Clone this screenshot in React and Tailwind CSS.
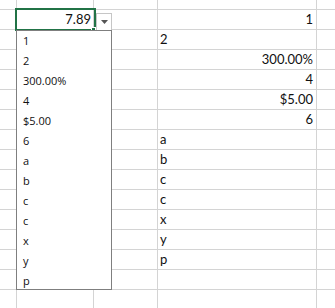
import React from 'react';

const CELL_FONT = { fontFamily: 'Lato, "Liberation Sans", sans-serif' };
const LIST_FONT = { fontFamily: '"Open Sans", "Noto Sans", sans-serif' };

// column D values, rows 1..15 (row 0 is the clipped one at the top)
const COL_D = [
  { v: '1', right: true },
  { v: '2' },
  { v: '300.00%', right: true },
  { v: '4', right: true },
  { v: '$5.00', right: true },
  { v: '6', right: true },
  { v: 'a' },
  { v: 'b' },
  { v: 'c' },
  { v: 'c' },
  { v: 'x' },
  { v: 'y' },
  { v: 'p' },
  { v: '' },
  { v: '' },
];

const LIST = ['1', '2', '300.00%', '4', '$5.00', '6', 'a', 'b', 'c', 'c', 'x', 'y', 'p'];

const Row = ({ h, b, d }) => (
  <div className={`flex ${h} border-b border-[#d4d4d4]`}>
    <div className="w-[17px] shrink-0 border-r border-[#d4d4d4]" />
    <div className="w-[77px] shrink-0 border-r border-[#d4d4d4] pr-[2px] text-right">{b}</div>
    <div className="w-[64px] shrink-0 border-r border-[#d4d4d4]" />
    <div
      className={`w-[159px] shrink-0 border-r border-[#d4d4d4] ${
        d && d.right ? 'pr-[3px] text-right' : 'pl-[2px] text-left'
      }`}
    >
      {d ? d.v : null}
    </div>
    <div className="flex-1" />
  </div>
);

export default function App() {
  return (
    <div className="relative w-[335px] h-[308px] overflow-hidden bg-white text-[13px] leading-[19px] text-[#111]" style={CELL_FONT}>
      <Row h="h-[10px]" />
      {COL_D.map((d, i) => (
        <Row key={i} h="h-[20px]" b={i === 0 ? '7.89' : null} d={d} />
      ))}

      {/* active cell */}
      <div className="absolute left-[15px] top-[8px] w-[81px] h-[23px] border-2 border-[#217346]" />
      <div className="absolute left-[91px] top-[27px] w-[5px] h-[4px] bg-[#217346] border border-white" />

      {/* dropdown button */}
      <div className="absolute left-[96px] top-[13px] w-[16px] h-[18px] bg-white border border-[#c6c6c6] flex items-center justify-center">
        <svg width="7" height="4" viewBox="0 0 7 4">
          <path d="M0 0h7L3.5 4z" fill="#555" />
        </svg>
      </div>

      {/* validation list */}
      <div
        className="absolute left-[16px] top-[30px] w-[96px] h-[260px] overflow-hidden bg-white border border-[#7f7f7f] text-[11px] leading-[20px] text-[#111]"
        style={LIST_FONT}
      >
        {LIST.map((item, i) => (
          <div key={i} className="h-[20px] pl-[6px]">
            {item}
          </div>
        ))}
      </div>
    </div>
  );
}
